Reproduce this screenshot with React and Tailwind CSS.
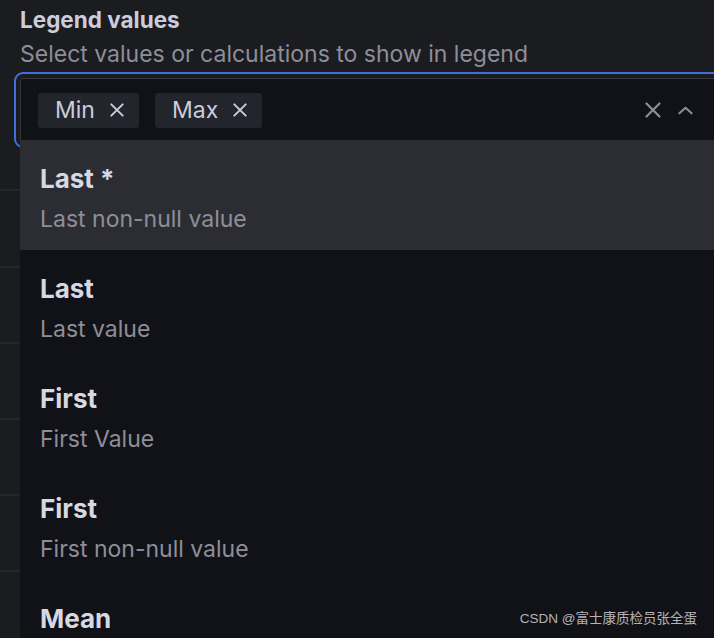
import React from 'react';

const options = [
  { label: 'Last *', description: 'Last non-null value', active: true },
  { label: 'Last', description: 'Last value' },
  { label: 'First', description: 'First Value' },
  { label: 'First', description: 'First non-null value' },
  { label: 'Mean' },
];

const XIcon = ({ className, strokeWidth = 1.8 }) => (
  <svg viewBox="0 0 16 16" className={className} fill="none" stroke="currentColor" strokeWidth={strokeWidth} strokeLinecap="round">
    <path d="M1.5 1.5l13 13M14.5 1.5l-13 13" />
  </svg>
);

const Chip = ({ label }) => (
  <div className="flex items-center h-[35px] pl-[17px] pr-[15px] rounded-[3px] bg-[#22252b] text-[#ccccdc] text-[23px]">
    <span>{label}</span>
    <XIcon className="w-[14px] h-[14px] ml-[15px] text-[#ccccdc]" strokeWidth={2.2} />
  </div>
);

const App = () => {
  return (
    <div className="relative w-[714px] h-[638px] overflow-hidden bg-[#1b1c20] font-['Inter','Liberation_Sans',sans-serif]">
      <div className="pl-5 pt-[5px]">
        <div className="text-[22.5px] leading-[30px] font-bold text-[#ccccdc]">Legend values</div>
        <div className="text-[23px] leading-[30px] text-[#8e8e9a] mt-[4px]">
          Select values or calculations to show in legend
        </div>
      </div>

      <div className="relative mt-[9px] ml-5">
        <div className="flex items-center w-[720px] h-[64px] pl-[17px] pr-[46px] bg-[#111217] border border-[#34353b] rounded-[3px] outline-2 outline-solid outline-offset-[4px] outline-[#3d71d9]">
          <div className="flex gap-4">
            <Chip label="Min" />
            <Chip label="Max" />
          </div>
          <div className="ml-auto flex items-center gap-[17px] text-[#8e8e9a]">
            <XIcon className="w-[16px] h-[16px]" strokeWidth={2.2} />
            <svg viewBox="0 0 16 16" className="w-[15px] h-[15px]" fill="none" stroke="currentColor" strokeWidth="2.2" strokeLinecap="round" strokeLinejoin="round">
              <path d="M1.5 11l6.5-6 6.5 6" />
            </svg>
          </div>
        </div>

        {/* dropdown menu */}
        <div className="absolute left-0 top-[62px] w-[700px] z-10 bg-[#111217]">
          {options.map((opt, i) => (
            <div key={i} className={`h-[110px] px-5 pt-[23px] ${opt.active ? 'bg-[#2c2d33]' : ''}`}>
              <div className="text-[26px] leading-[32px] font-bold text-[#d8d8e3]">{opt.label}</div>
              {opt.description && (
                <div className="text-[23px] leading-[30px] mt-[9px] text-[#8e8e9a]">{opt.description}</div>
              )}
            </div>
          ))}
        </div>
      </div>

      {/* rows behind the menu */}
      <div className="flex flex-col">
        <div className="h-[49px] border-b-2 border-[#25262b]" />
        <div className="h-[77px] border-b-2 border-[#25262b]" />
        <div className="h-[76px] border-b-2 border-[#25262b]" />
        <div className="h-[76px] border-b-2 border-[#25262b]" />
        <div className="h-[76px] border-b-2 border-[#25262b]" />
        <div className="h-[76px] border-b-2 border-[#25262b]" />
      </div>

      <div className="absolute right-[17px] bottom-[9px] z-20 text-[13.5px] text-[#b4b4b8] font-['Liberation_Sans','Noto_Sans_CJK_SC',sans-serif]">
        CSDN @富士康质检员张全蛋
      </div>
    </div>
  );
};

export default App;
